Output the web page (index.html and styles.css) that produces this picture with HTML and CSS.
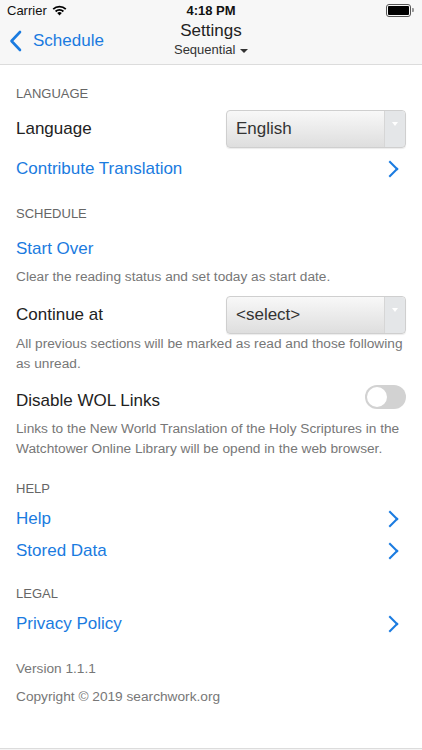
FILE: index.html
```html
<!DOCTYPE html>
<html lang="en">
<head>
    <meta charset="UTF-8">
    <meta name="viewport" content="width=device-width, initial-scale=1.0">
    <title>Settings</title>
    <link rel="stylesheet" href="styles.css">
</head>
<body>
    <div class="header">
        <div class="status-bar">
            <div class="carrier">
                Carrier
                <svg class="wifi" width="15" height="11" viewBox="0 0 15 11">
                    <path d="M7.5 10.5 L5.2 8.1 A3.3 3.3 0 0 1 9.8 8.1 Z" fill="#000"/>
                    <path d="M3.6 6.5 A5.6 5.6 0 0 1 11.4 6.5" stroke="#000" stroke-width="1.8" fill="none"/>
                    <path d="M1.2 4.1 A9 9 0 0 1 13.8 4.1" stroke="#000" stroke-width="1.8" fill="none"/>
                </svg>
            </div>
            <div class="time">4:18 PM</div>
            <div class="battery"><span class="battery-fill"></span></div>
        </div>
        <div class="nav-bar">
            <div class="back">
                <svg width="13" height="22" viewBox="0 0 13 22">
                    <path d="M11 2 L2.5 11 L11 20" stroke="#1a7be0" stroke-width="2.6" fill="none" stroke-linecap="round" stroke-linejoin="round"/>
                </svg>
                <span>Schedule</span>
            </div>
            <div class="nav-title">
                <div class="title">Settings</div>
                <div class="subtitle">Sequential <span class="caret"></span></div>
            </div>
        </div>
    </div>

    <div class="content">
        <div class="section-title lang-title">LANGUAGE</div>
        <div class="row select-row">
            <span class="label">Language</span>
            <div class="select"><span>English</span><span class="select-arrow"></span></div>
        </div>
        <div class="row link-row contribute">
            <span class="link">Contribute Translation</span>
            <span class="chevron"></span>
        </div>

        <div class="section-title schedule-title">SCHEDULE</div>
        <div class="row link-row start-over">
            <span class="link">Start Over</span>
        </div>
        <div class="note start-note">Clear the reading status and set today as start date.</div>
        <div class="row select-row continue">
            <span class="label">Continue at</span>
            <div class="select"><span>&lt;select&gt;</span><span class="select-arrow"></span></div>
        </div>
        <div class="note">All previous sections will be marked as read and those following as unread.</div>
        <div class="row toggle-row">
            <span class="label">Disable WOL Links</span>
            <span class="toggle"><span class="knob"></span></span>
        </div>
        <div class="note wol-note">Links to the New World Translation of the Holy Scriptures in the Watchtower Online Library will be opend in the web browser.</div>

        <div class="section-title help-title">HELP</div>
        <div class="row link-row">
            <span class="link">Help</span>
            <span class="chevron"></span>
        </div>
        <div class="row link-row">
            <span class="link">Stored Data</span>
            <span class="chevron"></span>
        </div>

        <div class="section-title legal-title">LEGAL</div>
        <div class="row link-row">
            <span class="link">Privacy Policy</span>
            <span class="chevron"></span>
        </div>

        <div class="note version">Version 1.1.1</div>
        <div class="note copyright">Copyright © 2019 searchwork.org</div>
    </div>

    <div class="bottom-line"></div>
</body>
</html>
```

FILE: styles.css
```css
html, body {
    margin: 0;
    padding: 0;
}
body {
    font-family: "Liberation Sans", Arial, sans-serif;
    color: #222;
    background: #fff;
    width: 422px;
    height: 750px;
    display: flex;
    flex-direction: column;
    overflow: hidden;
}
.header {
    background: #f7f7f7;
    border-bottom: 1px solid #dcdcdc;
    height: 64px;
}
.status-bar {
    height: 20px;
    display: flex;
    align-items: center;
    justify-content: space-between;
    padding: 0 8px 0 7px;
    font-size: 13px;
    position: relative;
}
.carrier {
    display: flex;
    align-items: center;
    gap: 5px;
    color: #111;
}
.time {
    position: absolute;
    left: 0;
    right: 0;
    text-align: center;
    font-weight: bold;
    font-size: 13px;
    color: #111;
}
.battery {
    width: 21px;
    height: 9px;
    border: 1px solid #555;
    border-radius: 3px;
    padding: 1px;
    position: relative;
    margin-right: 3px;
}
.battery::after {
    content: "";
    position: absolute;
    right: -4px;
    top: 3px;
    width: 2px;
    height: 4px;
    background: #999;
    border-radius: 0 1px 1px 0;
}
.battery-fill {
    display: block;
    width: 100%;
    height: 100%;
    background: #000;
    border-radius: 1px;
}
.nav-bar {
    height: 44px;
    display: flex;
    align-items: center;
    position: relative;
}
.back {
    display: flex;
    align-items: center;
    gap: 11px;
    padding-left: 9px;
    color: #1a7be0;
    font-size: 17px;
    margin-top: -2px;
}
.nav-title {
    position: absolute;
    left: 0;
    right: 0;
    top: 0;
    text-align: center;
}
.title {
    font-size: 17px;
    color: #222;
    line-height: 20px;
    margin-top: 1px;
}
.subtitle {
    font-size: 13px;
    color: #333;
    line-height: 18px;
    margin-top: 0;
}
.caret {
    display: inline-block;
    width: 0;
    height: 0;
    border-left: 4px solid transparent;
    border-right: 4px solid transparent;
    border-top: 4px solid #333;
    vertical-align: middle;
    margin-left: 1px;
}

.content {
    padding: 0 16px;
    flex: 1;
}
.section-title {
    font-size: 13px;
    color: #666;
    height: 28px;
    line-height: 28px;
}
.lang-title { margin-top: 15px; }
.schedule-title { margin-top: 15px; }
.help-title { margin-top: 16px; }
.legal-title { margin-top: 13px; }

.row {
    display: flex;
    align-items: center;
    justify-content: space-between;
}
.label {
    font-size: 17px;
    color: #222;
}
.link {
    font-size: 17px;
    color: #1a7be0;
}
.link-row {
    height: 32px;
}
.contribute { margin-top: 3px; }
.start-over { margin-top: 5px; }
.start-note { margin-top: 2px; }
.select-row {
    height: 42px;
}
.continue {
    height: 38px;
    margin-top: 9px;
}
.select {
    width: 178px;
    height: 36px;
    border: 1px solid #cfcfcf;
    border-radius: 4px;
    background: linear-gradient(to bottom, #f8f8f8, #dedede);
    display: flex;
    align-items: center;
    justify-content: space-between;
    font-size: 17px;
    color: #333;
    box-shadow: 0 1px 1px rgba(0, 0, 0, 0.08);
}
.select span:first-child {
    padding-left: 9px;
}
.select-arrow {
    width: 20px;
    height: 100%;
    border-left: 1px solid #d6d6d6;
    background: #e4e6e8;
    border-radius: 0 4px 4px 0;
    position: relative;
}
.select-arrow::after {
    content: "";
    position: absolute;
    left: 7px;
    top: 11px;
    border-left: 3px solid transparent;
    border-right: 3px solid transparent;
    border-top: 4px solid #fff;
}
.chevron {
    width: 10px;
    height: 10px;
    border-top: 2.6px solid #1a7be0;
    border-right: 2.6px solid #1a7be0;
    transform: rotate(45deg);
    margin-right: 10px;
}
.note {
    font-size: 13.7px;
    line-height: 20px;
    color: #777;
}
.toggle-row {
    height: 40px;
    margin-top: 7px;
}
.wol-note { margin-top: -2px; }
.toggle {
    width: 41px;
    height: 24px;
    border-radius: 12px;
    background: #d2d2d2;
    position: relative;
    margin-top: -9px;
}
.knob {
    position: absolute;
    left: 2px;
    top: 2px;
    width: 20px;
    height: 20px;
    border-radius: 50%;
    background: #fff;
}
.version { margin-top: 19px; }
.copyright { margin-top: 8px; }
.bottom-line {
    height: 2px;
    border-top: 1px solid #dcdcdc;
    background: #f4f4f4;
    box-sizing: border-box;
    flex-shrink: 0;
}
```
